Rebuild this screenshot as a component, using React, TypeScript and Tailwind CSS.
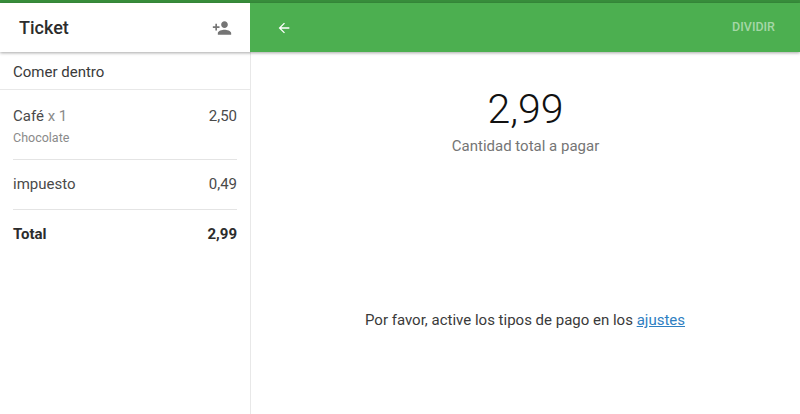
import { MdArrowBack, MdPersonAdd } from "react-icons/md";

const App = () => {
  return (
    <div className="w-[800px] h-[414px] overflow-hidden bg-white flex flex-col font-['Roboto',sans-serif] text-[#212121]">
      {/* Top strip */}
      <div className="h-[3px] shrink-0 bg-[#388e3c]" />

      <div className="flex h-[49px] shrink-0 relative z-10 shadow-[0_1px_3px_rgba(0,0,0,0.35)]">
        <div className="w-[250px] bg-white flex items-center justify-between pl-[19px] pr-[18px]">
          <span className="text-[18px] font-medium text-[#2c2c2c]">Ticket</span>
          <MdPersonAdd className="text-[20px] text-[#757575]" />
        </div>
        <div className="flex-1 bg-[#4caf50] flex items-center justify-between pl-[26px] pr-[25px]">
          <MdArrowBack className="text-[16px] text-white" />
          <span className="text-[12.5px] font-medium text-[#a5d7a7]">DIVIDIR</span>
        </div>
      </div>

      <div className="flex flex-1 min-h-0">
        {/* Ticket column */}
        <div className="w-[251px] shrink-0 border-r border-[#e8e8e8] text-[15px]">
          <div className="h-[38px] flex items-center pl-[13px] pt-[3px] border-b border-[#e8e8e8] text-[#3a3a3a]">
            Comer dentro
          </div>
          <div className="pl-[13px] pr-[13px]">
            <div className="h-[70px] border-b border-[#e4e4e4] pt-[16px]">
              <div className="flex justify-between leading-[20px] text-[#4a4a4a]">
                <span>
                  Café <span className="text-[#8a8a8a]">x 1</span>
                </span>
                <span>2,50</span>
              </div>
              <div className="text-[12.5px] leading-[16px] mt-[4px] text-[#8a8a8a]">Chocolate</div>
            </div>
            <div className="h-[50px] border-b border-[#e4e4e4] flex items-center justify-between text-[#4a4a4a]">
              <span>impuesto</span>
              <span>0,49</span>
            </div>
            <div className="h-[48px] flex items-center justify-between font-bold text-[#2c2c2c]">
              <span>Total</span>
              <span>2,99</span>
            </div>
          </div>
        </div>

        {/* Payment column */}
        <div className="flex-1 flex flex-col items-center">
          <div className="text-[41px] font-light leading-[48px] mt-[33px] text-[#111111]">2,99</div>
          <div className="text-[15px] leading-[20px] mt-[3px] text-[#757575]">Cantidad total a pagar</div>
          <div className="text-[15px] leading-[20px] mt-[154px] -ml-px text-[#3a3a3a]">
            Por favor, active los tipos de pago en los{" "}
            <a href="#" className="text-[#2f80c2] underline">
              ajustes
            </a>
          </div>
        </div>
      </div>
    </div>
  );
};

export default App;
